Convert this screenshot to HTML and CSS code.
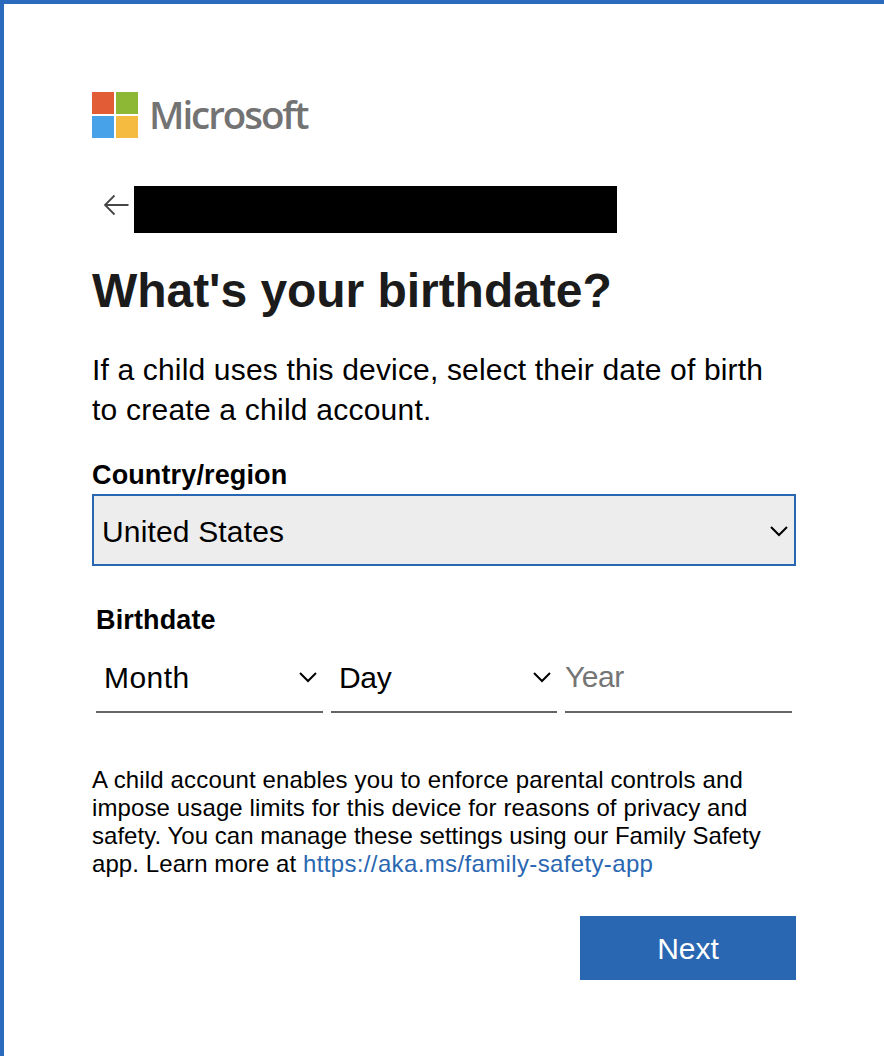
FILE: index.html
```html
<!DOCTYPE html>
<html lang="en">
<head>
<meta charset="utf-8">
<title>What's your birthdate?</title>
<link rel="stylesheet" href="styles.css">
</head>
<body>
<main class="page">
  <div class="brand">
    <svg class="brand-mark" viewBox="0 0 46 46" aria-hidden="true">
      <path fill="#e25c36" d="M0 0h22v22H0z"/><path fill="#8cb836" d="M24 0h22v22H24z"/>
      <path fill="#47a2ea" d="M0 24h22v22H0z"/><path fill="#f5bb41" d="M24 24h22v22H24z"/>
    </svg>
    <span class="brand-name">Microsoft</span>
  </div>
  <div class="identity">
    <svg class="back" viewBox="0 0 26 22" aria-label="Back">
      <path d="M2 11H25.500M11.500 1.500 2 11l9.500 9.500" fill="none" stroke="#464646" stroke-width="1.800"/>
    </svg>
    <div class="redacted"></div>
  </div>
  <h1 class="title">What's your birthdate?</h1>
  <p class="intro"><span class="i1">If a child uses this device, select their date of birth</span><br><span class="i2">to create a child account.</span></p>
  <div class="label country-label">Country/region</div>
  <div class="country"><span class="country-value">United States</span>
    <svg class="chevron" viewBox="0 0 18 11"><path d="M1 1l8 8 8-8"/></svg>
  </div>
  <div class="birth">
    <div class="label birth-label">Birthdate</div>
    <div class="fields">
      <div class="field"><span class="month">Month</span><svg class="chevron" viewBox="0 0 18 11"><path d="M1 1l8 8 8-8"/></svg></div>
      <div class="field"><span class="day">Day</span><svg class="chevron" viewBox="0 0 18 11"><path d="M1 1l8 8 8-8"/></svg></div>
      <div class="field year"><span>Year</span></div>
    </div>
  </div>
  <p class="note"><span class="n1">A child account enables you to enforce parental controls and</span><br><span class="n2">impose usage limits for this device for reasons of privacy and</span><br><span class="n3">safety. You can manage these settings using our Family Safety</span><br><span class="n4">app. Learn more at <a class="link">https://aka.ms/family-safety-app</a></span></p>
  <div class="actions"><button class="next">Next</button></div>
</main>
</body>
</html>
```
FILE: styles.css
```css
* { box-sizing: border-box; }
body { margin: 0; background: #fff; }
.page {
  width: 884px; height: 1056px; overflow: hidden;
  padding: 88px 88px 0;
  border-top: 4px solid #2a6bbd; border-left: 4px solid #2a6bbd;
  font-family: "Liberation Sans", Arial, sans-serif;
  color: #000; white-space: nowrap;
}
.brand { display: flex; align-items: flex-start; height: 46px; }
.brand-mark { width: 46px; height: 46px; }
.brand-name {
  margin-left: 11px; font: 600 38.500px/44px "Open Sans", sans-serif;
  letter-spacing: -2.050px; color: #737373;
}
.identity { display: flex; height: 47px; margin-top: 48px; padding-left: 11px; }
.back { width: 26px; height: 22px; margin-top: 8px; }
.redacted { width: 483px; height: 47px; margin-left: 5px; background: #000; }
.title { margin: 30px 0 0; height: 56px; font-size: 48px; line-height: 56px; letter-spacing: -0.050px; color: #1b1b1b; }
.intro { margin: 31px 0 0; font-size: 30px; line-height: 40px; }
.i1 { letter-spacing: 0.165px; }
.i2 { letter-spacing: 0.230px; }
.label { font-size: 27px; font-weight: 700; line-height: 36px; letter-spacing: 0.130px; }
.country-label { margin-top: 27px; }
.country {
  display: flex; align-items: center; justify-content: space-between;
  height: 72px; margin-top: 1px; padding: 2px 6px 0 8px; width: 704px;
  background: #ededed; border: 2px solid #2a67b2; font-size: 30px;
}
.country-value { padding-top: 2px; letter-spacing: 0.160px; }
.chevron { width: 18px; height: 11px; fill: none; stroke: #000; stroke-width: 2; }
.birth { width: 704px; padding: 0 4px; margin-top: 36px; }
.fields { display: grid; grid-template-columns: 227px 226px 227px; gap: 8px; margin-top: 10px; }
.field {
  display: flex; align-items: center; justify-content: space-between;
  height: 65px; padding: 0 6px 4px 8px;
  border-bottom: 2px solid #666; font-size: 30px; line-height: 34px;
}
.month { letter-spacing: 0.450px; }
.day { letter-spacing: -0.300px; }
.year { padding: 0 0 5px; color: #757575; letter-spacing: -0.500px; }
.note { margin: 53px 0 0; font-size: 24px; line-height: 28px; }
.n1 { letter-spacing: 0.155px; }
.n2 { letter-spacing: 0.115px; }
.n3 { letter-spacing: 0.035px; }
.n4 { letter-spacing: 0.080px; }
.link { color: #2a67b2; letter-spacing: 0.360px; }
.actions { display: flex; justify-content: flex-end; width: 704px; margin-top: 38px; }
.next {
  width: 216px; height: 64px; padding: 1px 0 0; border: 0;
  background: #2a67b2; color: #fff; font: 30px "Liberation Sans", Arial, sans-serif;
}
```
